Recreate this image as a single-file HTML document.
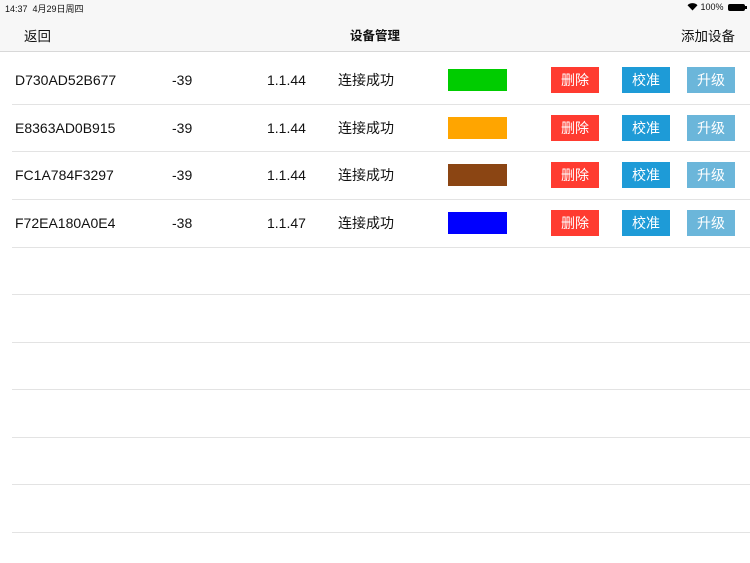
<!DOCTYPE html>
<html><head><meta charset="utf-8"><style>
*{margin:0;padding:0;box-sizing:border-box}
body{width:750px;height:563px;background:#fff;font-family:"Liberation Sans","Noto Sans CJK SC",sans-serif;color:#111;position:relative;overflow:hidden}
.top{position:absolute;left:0;top:0;width:750px;height:52px;background:#f7f7f7;border-bottom:1px solid #d8d8d8}
.abs{position:absolute;white-space:nowrap}
.line{position:absolute;left:12px;right:0;height:1px;background:#e3e3e3}
.t{position:absolute;font-size:14px;line-height:16px}
.sw{position:absolute;left:448px;width:59px;height:22px}
.b{position:absolute;width:48px;height:26px;color:#fff;font-size:14px;line-height:26px;text-align:center}
</style></head><body>
<div class="top"></div>
<div class="abs" style="left:5px;top:2px;font-size:9px">14:37&nbsp;&nbsp;4月29日周四</div>
<div class="abs" style="left:687px;top:2px;font-size:9px">
<svg width="11" height="9" viewBox="0 0 11 9" style="vertical-align:-1px"><path d="M5.5 8.5L0.5 3.2A7 7 0 0 1 10.5 3.2Z" fill="#000"/></svg> 100%</div>
<div class="abs" style="left:728px;top:4px;width:17px;height:7px;background:#000;border-radius:2px"></div>
<div class="abs" style="left:745px;top:6px;width:1.5px;height:3px;background:#000"></div>
<div class="abs" style="left:24px;top:25px;font-size:13.5px">返回</div>
<div class="abs" style="left:350px;top:25px;font-size:12.5px;font-weight:bold">设备管理</div>
<div class="abs" style="left:681px;top:25px;font-size:13.5px">添加设备</div>

<div class="line" style="top:104px"></div><div class="line" style="top:151px"></div><div class="line" style="top:199px"></div><div class="line" style="top:247px"></div><div class="line" style="top:294px"></div><div class="line" style="top:342px"></div><div class="line" style="top:389px"></div><div class="line" style="top:437px"></div><div class="line" style="top:484px"></div><div class="line" style="top:532px"></div>

<div style="position:absolute;left:0;top:72px;width:750px">
<div class="t" style="left:15px">D730AD52B677</div><div class="t" style="left:172px">-39</div><div class="t" style="left:267px">1.1.44</div><div class="t" style="left:338px">连接成功</div>
<div class="sw" style="top:-3px;background:#00cc00"></div>
<div class="b" style="left:551px;top:-5px;background:#ff3b30">删除</div><div class="b" style="left:622px;top:-5px;background:#1e9bd7">校准</div><div class="b" style="left:687px;top:-5px;background:#6bb6da">升级</div>
</div>
<div style="position:absolute;left:0;top:120px;width:750px">
<div class="t" style="left:15px">E8363AD0B915</div><div class="t" style="left:172px">-39</div><div class="t" style="left:267px">1.1.44</div><div class="t" style="left:338px">连接成功</div>
<div class="sw" style="top:-3px;background:#ffa500"></div>
<div class="b" style="left:551px;top:-5px;background:#ff3b30">删除</div><div class="b" style="left:622px;top:-5px;background:#1e9bd7">校准</div><div class="b" style="left:687px;top:-5px;background:#6bb6da">升级</div>
</div>
<div style="position:absolute;left:0;top:167px;width:750px">
<div class="t" style="left:15px">FC1A784F3297</div><div class="t" style="left:172px">-39</div><div class="t" style="left:267px">1.1.44</div><div class="t" style="left:338px">连接成功</div>
<div class="sw" style="top:-3px;background:#8b4513"></div>
<div class="b" style="left:551px;top:-5px;background:#ff3b30">删除</div><div class="b" style="left:622px;top:-5px;background:#1e9bd7">校准</div><div class="b" style="left:687px;top:-5px;background:#6bb6da">升级</div>
</div>
<div style="position:absolute;left:0;top:215px;width:750px">
<div class="t" style="left:15px">F72EA180A0E4</div><div class="t" style="left:172px">-38</div><div class="t" style="left:267px">1.1.47</div><div class="t" style="left:338px">连接成功</div>
<div class="sw" style="top:-3px;background:#0000ff"></div>
<div class="b" style="left:551px;top:-5px;background:#ff3b30">删除</div><div class="b" style="left:622px;top:-5px;background:#1e9bd7">校准</div><div class="b" style="left:687px;top:-5px;background:#6bb6da">升级</div>
</div>
</body></html>
